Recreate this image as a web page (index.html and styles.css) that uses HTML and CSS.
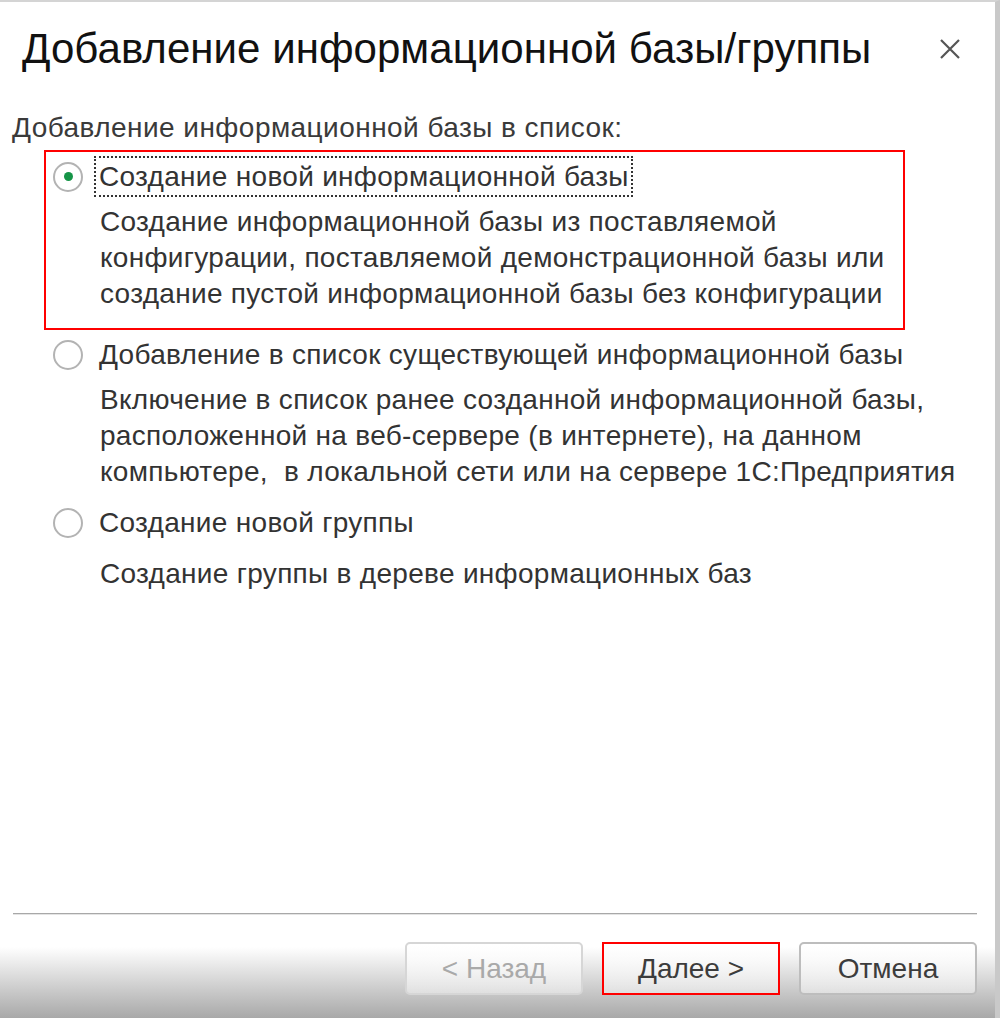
FILE: index.html
```html
<!DOCTYPE html>
<html lang="ru">
<head>
  <meta charset="UTF-8" />
  <meta name="viewport" content="width=device-width, initial-scale=1.0"/>
  <title>Добавление информационной базы/группы</title>
  <link rel="stylesheet" href="styles.css">
</head>
<body>
  <div class="window">
    <div class="title-bar">
      <h1 class="title">Добавление информационной базы/группы</h1>
      <span class="close" title="Закрыть">
        <svg width="22" height="22" viewBox="0 0 22 22">
          <path d="M2 2 L20 20 M20 2 L2 20" stroke="#555" stroke-width="2.2" fill="none"/>
        </svg>
      </span>
    </div>

    <div class="content">
      <div class="caption">Добавление информационной базы в список:</div>

      <div class="options">
        <div class="option selected">
          <div class="option-row">
            <span class="radio checked"></span>
            <span class="label focused">Создание новой информационной базы</span>
          </div>
          <div class="desc">
            Создание информационной базы из поставляемой<br>
            конфигурации, поставляемой демонстрационной базы или<br>
            создание пустой информационной базы без конфигурации
          </div>
        </div>

        <div class="option">
          <div class="option-row">
            <span class="radio"></span>
            <span class="label">Добавление в список существующей информационной базы</span>
          </div>
          <div class="desc">
            Включение в список ранее созданной информационной базы,<br>
            расположенной на веб-сервере (в интернете), на данном<br>
            компьютере,&nbsp; в локальной сети или на сервере 1С:Предприятия
          </div>
        </div>

        <div class="option">
          <div class="option-row">
            <span class="radio"></span>
            <span class="label">Создание новой группы</span>
          </div>
          <div class="desc desc-spaced">
            Создание группы в дереве информационных баз
          </div>
        </div>
      </div>
    </div>

    <div class="footer">
      <div class="separator"></div>
      <div class="buttons">
        <button class="btn" disabled>&lt; Назад</button>
        <button class="btn btn-default">Далее &gt;</button>
        <button class="btn">Отмена</button>
      </div>
    </div>
  </div>
</body>
</html>
```

FILE: styles.css
```css
* {
  margin: 0;
  padding: 0;
  box-sizing: border-box;
  font-family: 'Liberation Sans', Arial, sans-serif;
}
body {
  background: #fff;
}
.window {
  width: 1000px;
  height: 1018px;
  display: flex;
  flex-direction: column;
  border-top: 2px solid #d4d4d4;
  border-right: 5px solid #c9c9c9;
  background: linear-gradient(to bottom, #fff 0, #fff 945px, #a6a6a6 1018px);
  color: #333;
}
.title-bar {
  display: flex;
  justify-content: space-between;
  align-items: center;
  height: 94px;
  padding: 0 34px 0 22px;
}
.title {
  font-size: 42px;
  font-weight: normal;
  color: #111;
  letter-spacing: 0.05px;
}
.close {
  display: flex;
  cursor: pointer;
}
.content {
  flex: 1;
}
.caption {
  font-size: 28px;
  line-height: 36px;
  margin-top: 14px;
  padding-left: 12px;
  letter-spacing: 0.45px;
  color: #3a3a3a;
}
.options {
  margin: 4px 0 0 44px;
  white-space: nowrap;
}
.option {
  padding: 4px 9px 0;
  margin-bottom: 8px;
}
.option.selected {
  width: 861px;
  padding: 4px 7px 16px;
  border: 2px solid #f00;
  margin-bottom: 0;
}
.option-row {
  display: flex;
  align-items: center;
  gap: 11px;
  height: 41px;
}
.radio {
  width: 30px;
  height: 30px;
  border-radius: 50%;
  border: 2px solid #b3b3b3;
  background: #fff;
  display: flex;
  align-items: center;
  justify-content: center;
  flex-shrink: 0;
}
.radio.checked::after {
  content: '';
  width: 9px;
  height: 9px;
  border-radius: 50%;
  background: #159447;
}
.label {
  font-size: 28px;
  line-height: 37px;
  padding: 0 2px 0 3px;
  letter-spacing: 0.3px;
  border: 2px solid transparent;
}
.label.focused {
  border: 2px dotted #333;
}
.desc {
  font-size: 28px;
  line-height: 36px;
  padding-left: 47px;
  margin-top: 7px;
  letter-spacing: 0.3px;
}
.desc-spaced {
  margin-top: 13px;
}
.footer {
  padding: 0 18px 23px 13px;
}
.separator {
  height: 2px;
  background: #a8a8a8;
  border-bottom: 1px solid #e4e4e4;
}
.buttons {
  display: flex;
  justify-content: flex-end;
  gap: 19px;
  margin-top: 27px;
}
.btn {
  width: 178px;
  height: 53px;
  font-size: 28px;
  color: #3c3c3c;
  background: linear-gradient(to bottom, rgba(255,255,255,0.95), rgba(240,240,240,0.6));
  border: 2px solid #bdbdbd;
  border-radius: 5px;
  cursor: pointer;
}
.btn:disabled {
  color: #a9a9a9;
  border-color: #d6d6d6;
  cursor: default;
}
.btn-default {
  border-color: #f00;
  border-radius: 0;
}
```
